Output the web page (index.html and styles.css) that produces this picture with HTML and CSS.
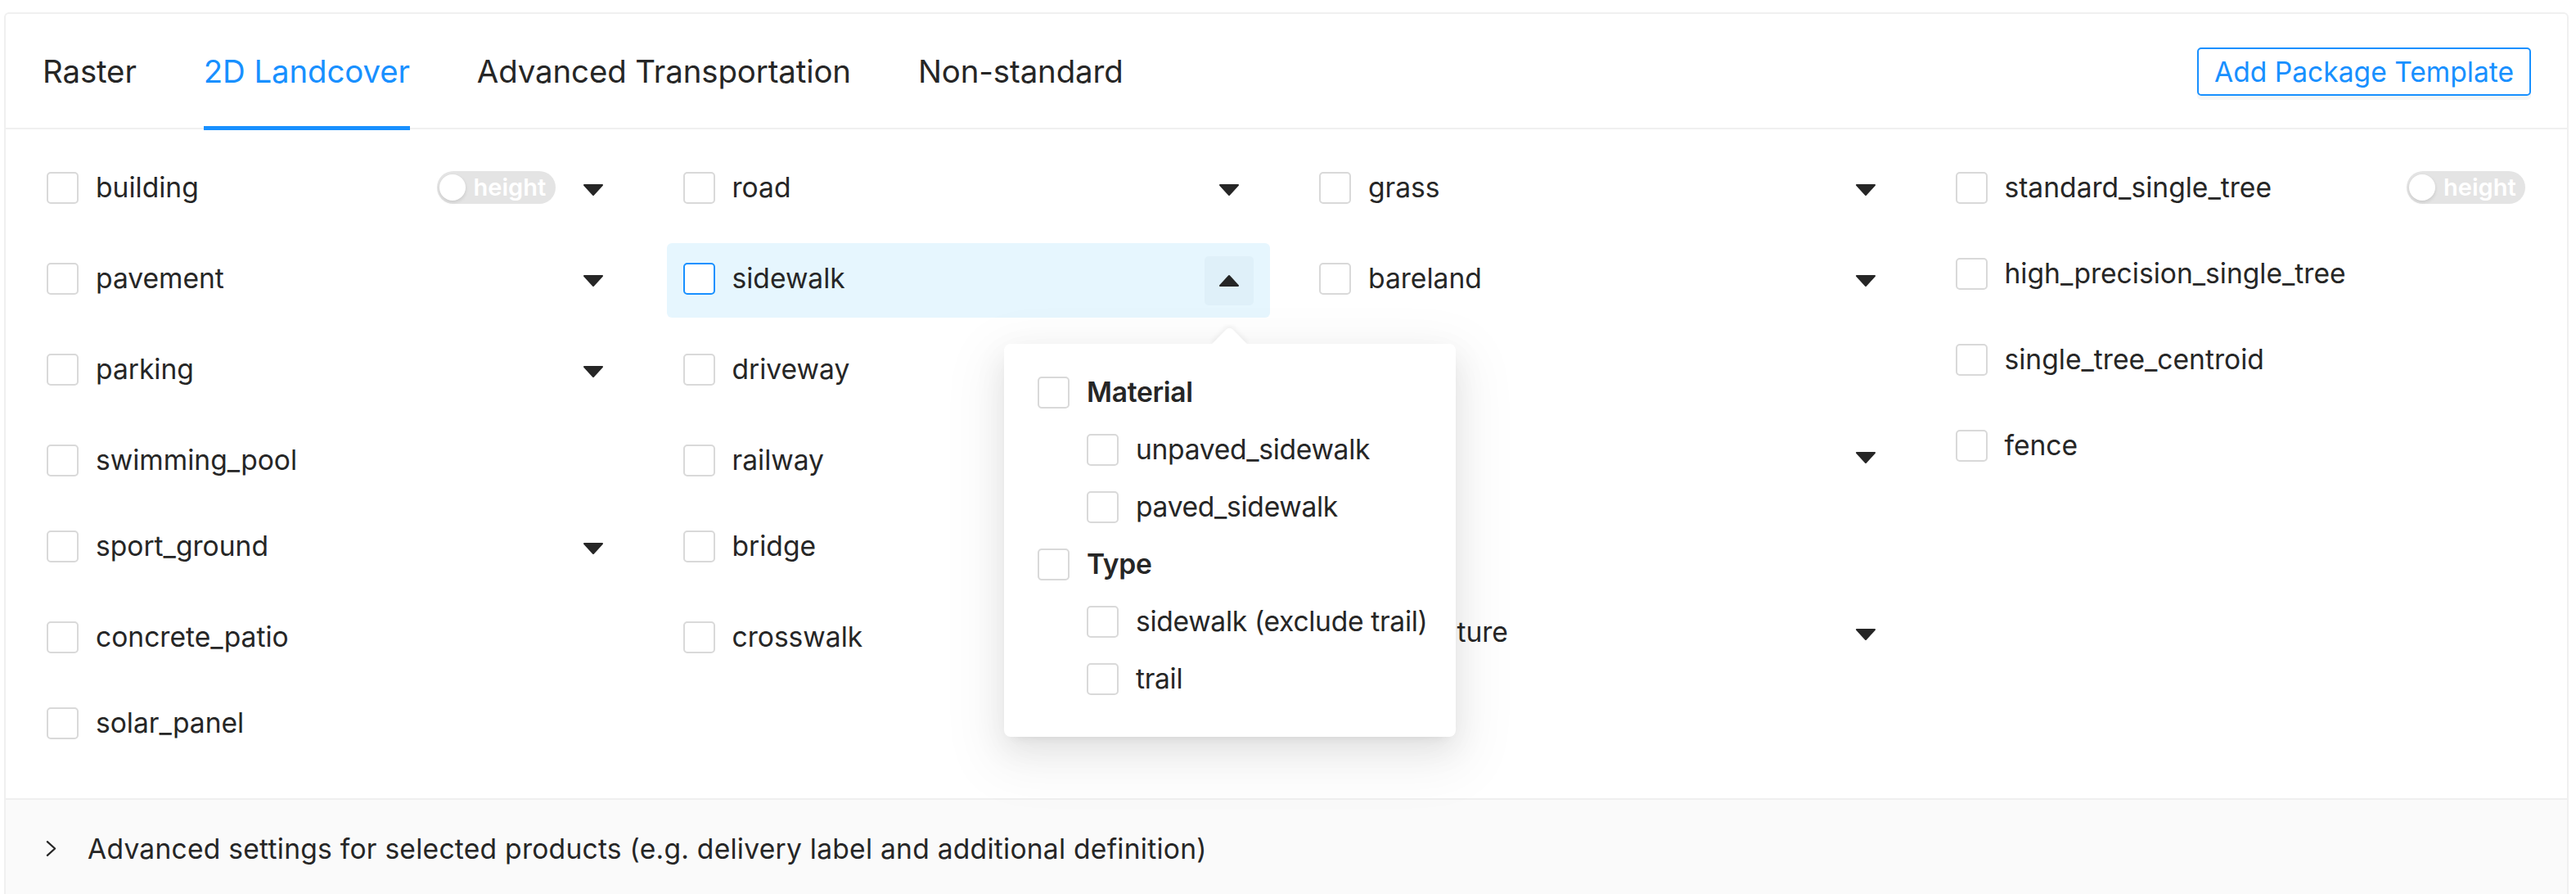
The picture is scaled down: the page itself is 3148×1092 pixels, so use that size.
FILE: index.html
```html
<!DOCTYPE html>
<html lang="en">
<head>
<meta charset="utf-8">
<title>2D Landcover</title>
<link rel="stylesheet" href="styles.css">
</head>
<body>
<div class="card">
  <div class="tabbar">
    <div class="tabs">
      <div class="tab">Raster</div>
      <div class="tab active">2D Landcover</div>
      <div class="tab">Advanced Transportation</div>
      <div class="tab">Non-standard</div>
    </div>
    <button class="btn">Add Package Template</button>
  </div>

  <div class="body">
    <div class="col">
      <div class="item">
        <div class="main"><span class="cb"></span><span class="label">building</span></div>
        <div class="extras">
          <span class="swbox"><span class="switch"><span class="knob"></span><span class="sw-text">height</span></span></span>
          <span class="caret"><svg viewBox="0 0 26 16" class="tri"><polygon points="2,2 24,2 13,14"/></svg></span>
        </div>
      </div>
      <div class="item">
        <div class="main"><span class="cb"></span><span class="label">pavement</span></div>
        <div class="extras"><span class="caret"><svg viewBox="0 0 26 16" class="tri"><polygon points="2,2 24,2 13,14"/></svg></span></div>
      </div>
      <div class="item">
        <div class="main"><span class="cb"></span><span class="label">parking</span></div>
        <div class="extras"><span class="caret"><svg viewBox="0 0 26 16" class="tri"><polygon points="2,2 24,2 13,14"/></svg></span></div>
      </div>
      <div class="item">
        <div class="main"><span class="cb"></span><span class="label">swimming_pool</span></div>
      </div>
      <div class="item">
        <div class="main"><span class="cb"></span><span class="label">sport_ground</span></div>
        <div class="extras"><span class="caret"><svg viewBox="0 0 26 16" class="tri"><polygon points="2,2 24,2 13,14"/></svg></span></div>
      </div>
      <div class="item">
        <div class="main"><span class="cb"></span><span class="label">concrete_patio</span></div>
      </div>
      <div class="item">
        <div class="main"><span class="cb"></span><span class="label">solar_panel</span></div>
      </div>
    </div>

    <div class="col">
      <div class="item">
        <div class="main"><span class="cb"></span><span class="label">road</span></div>
        <div class="extras"><span class="caret"><svg viewBox="0 0 26 16" class="tri"><polygon points="2,2 24,2 13,14"/></svg></span></div>
      </div>
      <div class="item open">
        <div class="main"><span class="cb hover"></span><span class="label">sidewalk</span></div>
        <div class="extras">
          <span class="caret on"><svg viewBox="0 0 26 16" class="tri"><polygon points="2,14 24,14 13,2"/></svg>
            <div class="popover">
              <div class="arrow-clip"><div class="arrow"></div></div>
              <div class="tree">
                <div class="node"><span class="cb"></span><span class="label strong">Material</span></div>
                <div class="node child"><span class="cb"></span><span class="label">unpaved_sidewalk</span></div>
                <div class="node child"><span class="cb"></span><span class="label">paved_sidewalk</span></div>
                <div class="node"><span class="cb"></span><span class="label strong">Type</span></div>
                <div class="node child"><span class="cb"></span><span class="label">sidewalk (exclude trail)</span></div>
                <div class="node child"><span class="cb"></span><span class="label">trail</span></div>
              </div>
            </div>
          </span>
        </div>
      </div>
      <div class="item">
        <div class="main"><span class="cb"></span><span class="label">driveway</span></div>
        <div class="extras"><span class="caret"><svg viewBox="0 0 26 16" class="tri"><polygon points="2,2 24,2 13,14"/></svg></span></div>
      </div>
      <div class="item">
        <div class="main"><span class="cb"></span><span class="label">railway</span></div>
      </div>
      <div class="item">
        <div class="main"><span class="cb"></span><span class="label">bridge</span></div>
        <div class="extras"><span class="caret"><svg viewBox="0 0 26 16" class="tri"><polygon points="2,2 24,2 13,14"/></svg></span></div>
      </div>
      <div class="item">
        <div class="main"><span class="cb"></span><span class="label">crosswalk</span></div>
      </div>
    </div>

    <div class="col">
      <div class="item">
        <div class="main"><span class="cb"></span><span class="label">grass</span></div>
        <div class="extras"><span class="caret"><svg viewBox="0 0 26 16" class="tri"><polygon points="2,2 24,2 13,14"/></svg></span></div>
      </div>
      <div class="item">
        <div class="main"><span class="cb"></span><span class="label">bareland</span></div>
        <div class="extras"><span class="caret"><svg viewBox="0 0 26 16" class="tri"><polygon points="2,2 24,2 13,14"/></svg></span></div>
      </div>
      <div class="item">
        <div class="main"><span class="cb"></span><span class="label">water</span></div>
      </div>
      <div class="item">
        <div class="main"><span class="cb"></span><span class="label">forest</span></div>
        <div class="extras"><span class="caret"><svg viewBox="0 0 26 16" class="tri"><polygon points="2,2 24,2 13,14"/></svg></span></div>
      </div>
      <div class="item">
        <div class="main"><span class="cb"></span><span class="label">shrub</span></div>
      </div>
      <div class="item">
        <div class="main"><span class="cb"></span><span class="label">agriculture</span></div>
        <div class="extras"><span class="caret"><svg viewBox="0 0 26 16" class="tri"><polygon points="2,2 24,2 13,14"/></svg></span></div>
      </div>
    </div>

    <div class="col">
      <div class="item">
        <div class="main"><span class="cb"></span><span class="label">standard_single_tree</span></div>
        <div class="extras">
          <span class="swbox last"><span class="switch"><span class="knob"></span><span class="sw-text">height</span></span></span>
        </div>
      </div>
      <div class="item">
        <div class="main"><span class="cb"></span><span class="label">high_precision_single_tree</span></div>
      </div>
      <div class="item">
        <div class="main"><span class="cb"></span><span class="label">single_tree_centroid</span></div>
      </div>
      <div class="item">
        <div class="main"><span class="cb"></span><span class="label">fence</span></div>
      </div>
    </div>
  </div>

  <div class="collapse">
    <svg class="chev" viewBox="0 0 14 22"><path d="M2 2 L12 11 L2 20"/></svg>
    <span class="collapse-title">Advanced settings for selected products (e.g. delivery label and additional definition)</span>
  </div>
</div>
</body>
</html>
```

FILE: styles.css
```css
html, body {
  margin: 0;
  padding: 0;
  background: #ffffff;
  overflow: hidden;
}

body {
  font-family: "Inter", "Noto Sans", "Liberation Sans", sans-serif;
  color: #262626;
}

.card {
  margin: 15px 9px 0 5px;
  border: 2px solid #f0f0f0;
  border-radius: 6px;
  background: #ffffff;
}

/* ---------- tab bar ---------- */
.tabbar {
  height: 139px;
  border-bottom: 2px solid #f0f0f0;
  display: flex;
  align-items: center;
  justify-content: space-between;
  padding: 0 44px 0 45px;
}

.tabs {
  display: flex;
  height: 100%;
  gap: 82px;
}

.tab {
  position: relative;
  display: flex;
  align-items: center;
  font-size: 38.4px;
  letter-spacing: -0.1px;
  color: #262626;
  white-space: nowrap;
}

.tab.active {
  color: #1890ff;
}

.tab.active::after {
  content: "";
  position: absolute;
  left: 0;
  right: 0;
  bottom: -3px;
  height: 5px;
  background: #1890ff;
}

.btn {
  height: 59px;
  padding: 0 19px;
  border: 2px solid #1890ff;
  border-radius: 5px;
  background: #ffffff;
  color: #1890ff;
  font-family: inherit;
  font-size: 33.6px;
  box-shadow: 0 5px 0 rgba(0, 0, 0, 0.035);
  margin-top: 2px;
}

/* ---------- grid of items ---------- */
.body {
  display: grid;
  grid-template-columns: repeat(4, 1fr);
  column-gap: 40px;
  align-items: start;
  padding: 28px 30px 50px 30px;
}

.col {
  display: flex;
  flex-direction: column;
  gap: 20px;
}

.item {
  display: flex;
  align-items: flex-start;
  padding: 16px 20px 15px 20px;
  border-radius: 6px;
}

.item.open {
  background: #e6f6fe;
}

.main {
  display: flex;
  align-items: center;
  height: 54px;
  gap: 21px;
  white-space: nowrap;
}

.cb {
  box-sizing: border-box;
  width: 39px;
  height: 39px;
  flex: none;
  border: 2px solid #d9d9d9;
  border-radius: 5px;
  background: #ffffff;
}

.cb.hover {
  border-color: #1890ff;
}

.label {
  font-size: 33.6px;
  line-height: 54px;
  color: #262626;
}

.label.strong {
  font-weight: 600;
}

.extras {
  margin-left: auto;
  display: flex;
  align-items: flex-start;
  gap: 16px;
}

.swbox {
  height: 54px;
  display: flex;
  align-items: center;
}

.swbox.last {
  margin-right: 1px;
}

.switch {
  position: relative;
  box-sizing: border-box;
  width: 145px;
  height: 40px;
  border-radius: 20px;
  background: #e4e4e4;
  display: flex;
  align-items: center;
}

.knob {
  position: absolute;
  left: 3px;
  top: 4px;
  width: 32px;
  height: 32px;
  border-radius: 50%;
  background: #ffffff;
  box-shadow: 0 2px 4px rgba(0, 0, 0, 0.12);
}

.sw-text {
  padding-left: 45px;
  font-size: 29px;
  font-weight: 600;
  color: #ffffff;
  line-height: 40px;
}

.caret {
  position: relative;
  width: 60px;
  height: 60px;
  flex: none;
  border-radius: 5px;
  display: flex;
  align-items: center;
  justify-content: center;
}

.caret.on {
  background: #dff0f9;
}

.tri {
  width: 26px;
  height: 16px;
}

.tri polygon {
  fill: #262626;
  stroke: #262626;
  stroke-width: 2;
  stroke-linejoin: round;
}

/* ---------- popover ---------- */
.popover {
  position: absolute;
  left: -245px;
  top: 107px;
  z-index: 10;
  box-sizing: border-box;
  width: 552px;
  background: #ffffff;
  border-radius: 8px;
  box-shadow: 0 7px 14px -10px rgba(0, 0, 0, 0.12),
              0 14px 38px 0 rgba(0, 0, 0, 0.08),
              0 22px 67px 19px rgba(0, 0, 0, 0.05);
}

.arrow-clip {
  position: absolute;
  left: 250px;
  top: -24px;
  width: 50px;
  height: 24px;
  overflow: hidden;
}

.arrow {
  position: absolute;
  left: 9.5px;
  top: 8.5px;
  width: 31px;
  height: 31px;
  background: #ffffff;
  transform: rotate(45deg);
  border-top-left-radius: 5px;
  box-shadow: -2px -2px 6px rgba(0, 0, 0, 0.06);
}

.tree {
  display: flex;
  flex-direction: column;
  gap: 16px;
  padding: 32px 40px 44px 41px;
}

.node {
  display: flex;
  align-items: center;
  height: 54px;
  gap: 21px;
  white-space: nowrap;
}

.node.child {
  padding-left: 60px;
}

.node .label {
  letter-spacing: -0.3px;
}

/* ---------- collapse ---------- */
.collapse {
  display: flex;
  align-items: center;
  gap: 38px;
  border-top: 2px solid #efefef;
  background: #fafafa;
  padding: 32px 49px 40px 49px;
  height: 54px;
}

.chev {
  width: 13px;
  height: 21px;
  flex: none;
}

.chev path {
  fill: none;
  stroke: #262626;
  stroke-width: 2.4;
  stroke-linecap: round;
  stroke-linejoin: round;
}

.collapse-title {
  font-size: 33.6px;
  letter-spacing: 0.25px;
  color: #262626;
  white-space: nowrap;
}
```
